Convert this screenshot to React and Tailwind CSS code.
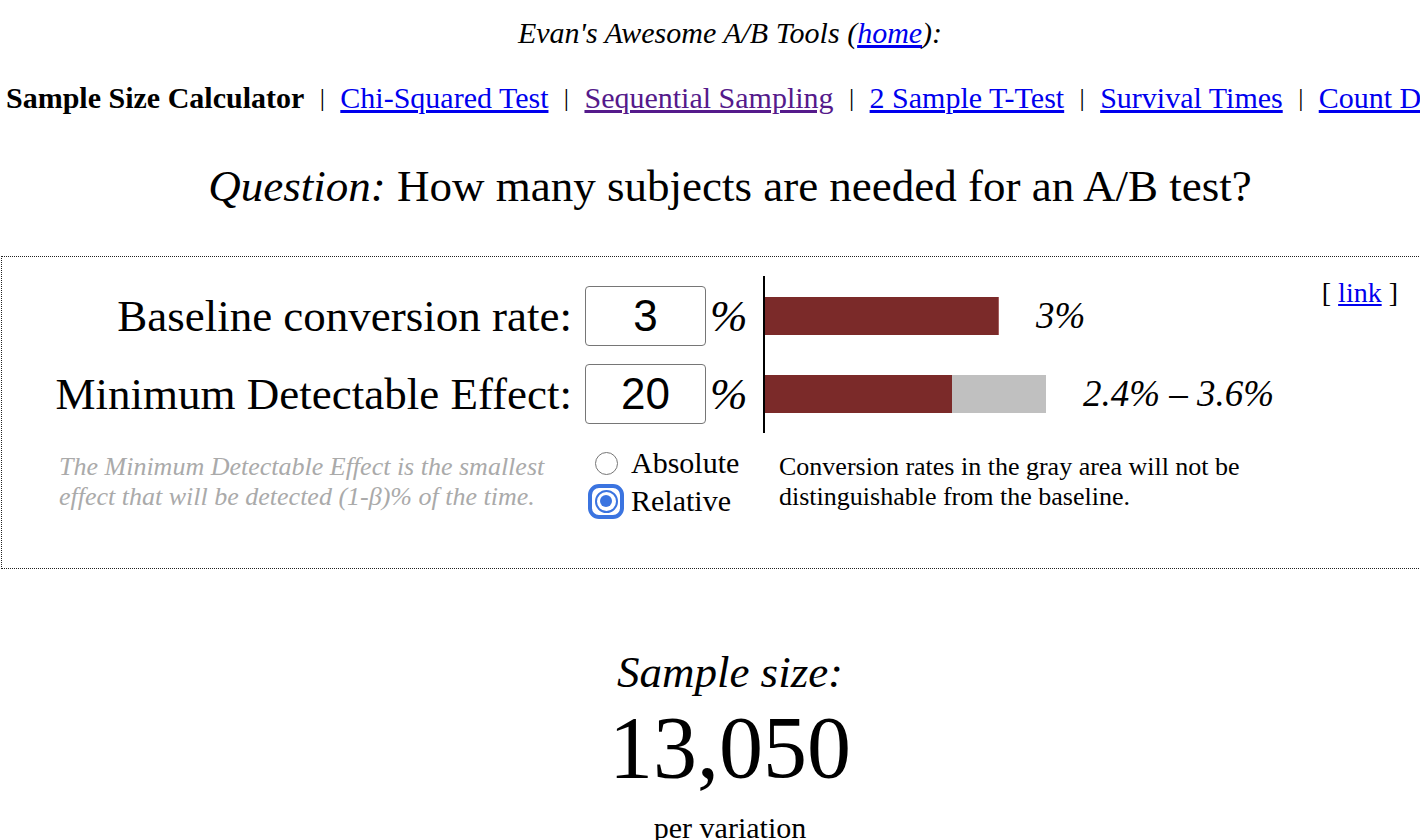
export default function App() {
  const Sep = () => (
    <span className="inline-block w-[36px] text-center text-[26px] text-black align-[2px]">|</span>
  );
  return (
    <div className="w-full overflow-hidden bg-white text-black font-['Liberation_Serif','Times_New_Roman',serif]">
      <div className="w-[1460px]">
        <div className="mt-[15px] text-center italic text-[30px] leading-[36px]">
          Evan's Awesome A/B Tools (<a href="#" className="text-[#0000ee] underline">home</a>):
        </div>
        <div className="mt-[29px] pl-[6px] whitespace-nowrap text-[30px] leading-[36px]">
          <b>Sample Size Calculator</b>
          <Sep />
          <a href="#" className="text-[#0000ee] underline">Chi-Squared Test</a>
          <Sep />
          <a href="#" className="text-[#551a8b] underline">Sequential Sampling</a>
          <Sep />
          <a href="#" className="text-[#0000ee] underline">2 Sample T-Test</a>
          <Sep />
          <a href="#" className="text-[#0000ee] underline">Survival Times</a>
          <Sep />
          <a href="#" className="text-[#0000ee] underline">Count Data</a>
        </div>
        <div className="mt-[43px] text-center text-[45px] leading-[54px]">
          <i>Question:</i> How many subjects are needed for an A/B test?
        </div>

        <div className="mt-[43px] ml-[1px] w-[1458px] border border-dotted border-[#222] pt-[19px] pb-[48px]">
          {/* Row 1 */}
          <div className="flex">
            <div className="w-[570px] text-right text-[45px] leading-[60px] pt-[10px] pb-[9px] whitespace-nowrap">
              Baseline conversion rate:
            </div>
            <div className="ml-[13px] pt-[10px] pb-[9px]">
              <input
                readOnly
                value="3"
                className="w-[121px] h-[60px] border-[1.5px] border-[#767676] rounded-[4px] text-center text-[44px] font-['Liberation_Sans',Arial,sans-serif] outline-none"
              />
            </div>
            <div className="ml-[4px] w-[53px] italic text-[45px] leading-[60px] pt-[10px] pb-[9px]">%</div>
            <div className="flex-1 flex items-center border-l-2 border-black pr-[60px]">
              <div className="w-[234px] h-[38px] bg-[#7b2a29] border-r border-[#a45d5d]"></div>
              <div className="ml-[37px] italic text-[37px]">3%</div>
              <div className="ml-auto self-start mt-[1px] text-[28px] leading-[32px]">
                [ <a href="#" className="text-[#0000ee] underline">link</a> ]
              </div>
            </div>
          </div>
          {/* Row 2 */}
          <div className="flex">
            <div className="w-[570px] text-right text-[45px] leading-[60px] pt-[9px] pb-[9px] whitespace-nowrap">
              Minimum Detectable Effect:
            </div>
            <div className="ml-[13px] pt-[9px] pb-[9px]">
              <input
                readOnly
                value="20"
                className="w-[121px] h-[60px] border-[1.5px] border-[#767676] rounded-[4px] text-center text-[44px] font-['Liberation_Sans',Arial,sans-serif] outline-none"
              />
            </div>
            <div className="ml-[4px] w-[53px] italic text-[45px] leading-[60px] pt-[9px] pb-[9px]">%</div>
            <div className="flex-1 flex items-center border-l-2 border-black pr-[60px]">
              <div className="w-[187px] h-[38px] bg-[#7b2a29]"></div>
              <div className="w-[94px] h-[38px] bg-[#c0c0c0]"></div>
              <div className="ml-[37px] italic text-[37px]">2.4% – 3.6%</div>
            </div>
          </div>
          {/* Bottom */}
          <div className="mt-[11px] flex items-start">
            <div className="ml-[57px] w-[529px] mt-[8px] pr-[20px] italic text-[#aaaaaa] text-[26px] leading-[30px]">
              The Minimum Detectable Effect is the smallest effect that will be detected (1-β)% of the time.
            </div>
            <div className="w-[191px] text-[30px] leading-[38px]">
              <div className="flex items-center">
                <span className="w-[36px] h-[38px] flex items-center justify-center">
                  <span className="w-[23px] h-[23px] rounded-full border-[1.5px] border-[#767676] bg-white"></span>
                </span>
                <span className="ml-[7px]">Absolute</span>
              </div>
              <div className="flex items-center">
                <span className="w-[36px] h-[38px] flex items-center justify-center">
                  <span className="w-[36px] h-[35px] rounded-[11px] border-[4px] border-[#3b74e0] flex items-center justify-center bg-white">
                    <span className="w-[23px] h-[23px] rounded-full border-[2.5px] border-[#3b74e0] flex items-center justify-center bg-white">
                      <span className="w-[12px] h-[12px] rounded-full bg-[#3b74e0]"></span>
                    </span>
                  </span>
                </span>
                <span className="ml-[7px]">Relative</span>
              </div>
            </div>
            <div className="mt-[8px] w-[480px] text-[26px] leading-[30px]">
              Conversion rates in the gray area will not be distinguishable from the baseline.
            </div>
          </div>
        </div>

        <div className="mt-[76px] text-center italic text-[45px] leading-[54px]">Sample size:</div>
        <div className="mt-[5px] text-center text-[88px] leading-[88px]">13,050</div>
        <div className="mt-[18px] text-center text-[30px] leading-[36px]">per variation</div>
      </div>
    </div>
  );
}
